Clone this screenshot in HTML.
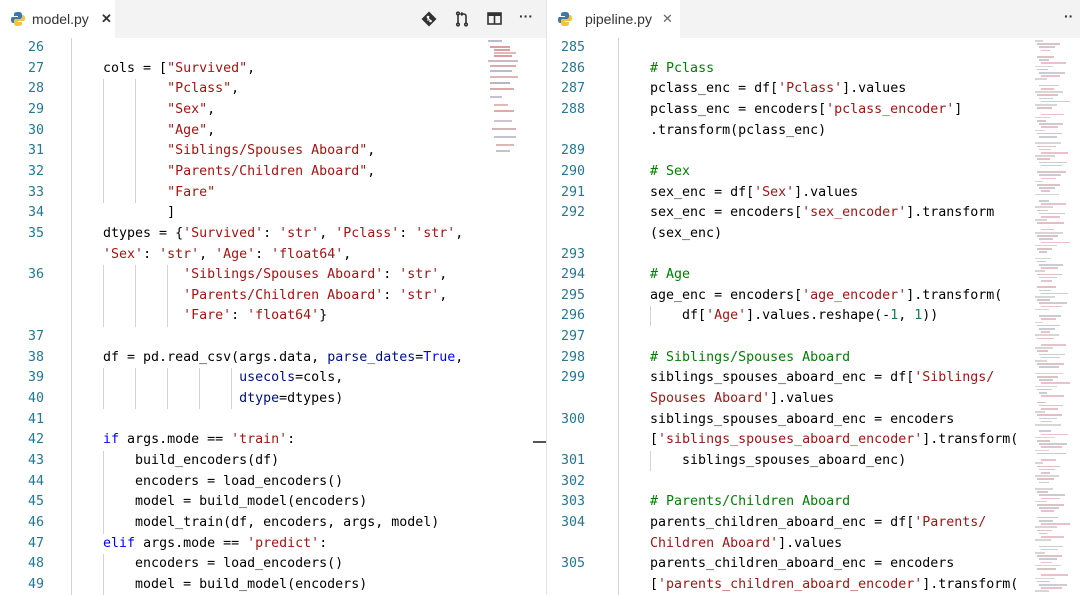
<!DOCTYPE html>
<html><head><meta charset="utf-8"><style>
*{margin:0;padding:0;box-sizing:border-box}
body{width:1080px;height:595px;overflow:hidden;background:#fff;position:relative;font-family:"DejaVu Sans Mono","Liberation Mono",monospace;font-size:13.3px;color:#000}
.tabbar{position:absolute;top:0;height:38px;background:#f3f3f3}
.tab{position:absolute;top:0;height:38px;background:#fff;font-family:"Liberation Sans",sans-serif;font-size:14px;color:#333;line-height:38px}
.pane{position:absolute;top:38px;bottom:0;overflow:hidden}
.row{position:absolute;left:0;height:20.65px;line-height:20.65px;white-space:pre;width:100%}
.ln{position:absolute;text-align:right;color:#237893}
.cd{position:absolute}
.s{color:#a31515}.k{color:#0000ff}.c{color:#008000}.p{color:#001080}.n{color:#098658}
.g{position:absolute;width:1px;background:#d3d3d3}
.mm{position:absolute;height:2px}
</style></head><body>
<div class="tabbar" style="left:0;width:546px"></div>
<div class="tabbar" style="left:547px;width:533px"></div>
<div style="position:absolute;left:546px;top:0;width:1px;height:595px;background:#e4e4e4"></div>
<div class="tab" style="left:0;width:115px">
<svg style="position:absolute;left:10px;top:11px" width="16" height="16" viewBox="0 0 16 16"><path d="M8 1C4 1 4 2.5 4 3.5V5h4v1H2.5C1 6 1 8 1 9s.5 3 2 3H4v-2c0-1.5 1-2 2-2h4c1 0 2-1 2-2V3.5C12 2 11 1 8 1z" fill="#3c78aa"/><path d="M8 15c4 0 4-1.5 4-2.5V11H8v-1h5.5C15 10 15 8 15 7s-.5-3-2-3H12v2c0 1.5-1 2-2 2H6c-1 0-2 1-2 2v2.5C4 14 5 15 8 15z" fill="#f3c33b"/></svg>
<span style="position:absolute;left:32px">model.py</span><span style="position:absolute;left:101px;font-weight:bold;font-size:13px">✕</span></div>
<svg style="position:absolute;left:421px;top:11px" width="16" height="16" viewBox="0 0 16 16"><path d="M8 0.5L15.5 8 8 15.5 0.5 8z" fill="#333"/><circle cx="7" cy="6" r="1.3" fill="#fff"/><circle cx="9.5" cy="10" r="1.3" fill="#fff"/><path d="M7 6v4M7 7l2.5 2.5" stroke="#fff" stroke-width="1"/></svg>
<svg style="position:absolute;left:454px;top:11px" width="16" height="16" viewBox="0 0 16 16" fill="none" stroke="#333" stroke-width="1.6"><path d="M4 3v9"/><path d="M12 13V5c0-1-1-2-2-2H7"/><path d="M8.5 1.5L7 3l1.5 1.5"/><circle cx="4" cy="13.5" r="1.3"/><circle cx="12" cy="13.5" r="1.3"/><circle cx="4" cy="2.5" r="1.3"/></svg>
<svg style="position:absolute;left:487px;top:12px" width="15" height="13" viewBox="0 0 15 13"><rect x="1" y="1" width="13" height="11" fill="none" stroke="#333" stroke-width="1.6"/><rect x="1" y="1" width="13" height="3" fill="#333"/><path d="M7.5 1v11" stroke="#333" stroke-width="1.6"/></svg>
<div style="position:absolute;left:519px;top:8px;font-family:'Liberation Sans';font-size:14px;color:#333;font-weight:bold">···</div>
<div class="tab" style="left:547px;width:133px">
<svg style="position:absolute;left:10px;top:11px" width="16" height="16" viewBox="0 0 16 16"><path d="M8 1C4 1 4 2.5 4 3.5V5h4v1H2.5C1 6 1 8 1 9s.5 3 2 3H4v-2c0-1.5 1-2 2-2h4c1 0 2-1 2-2V3.5C12 2 11 1 8 1z" fill="#3c78aa"/><path d="M8 15c4 0 4-1.5 4-2.5V11H8v-1h5.5C15 10 15 8 15 7s-.5-3-2-3H12v2c0 1.5-1 2-2 2H6c-1 0-2 1-2 2v2.5C4 14 5 15 8 15z" fill="#f3c33b"/></svg>
<span style="position:absolute;left:38px">pipeline.py</span><span style="position:absolute;left:115px;font-size:13px;color:#666">✕</span></div>
<div style="position:absolute;left:1064px;top:8px;font-family:'Liberation Sans';font-size:14px;color:#333;font-weight:bold">··</div>

<div class="pane" style="left:0;width:546px">
<div class="g" style="left:71px;top:0;height:560px"></div>
<div class="g" style="left:103px;top:41px;height:124px"></div>
<div class="g" style="left:135px;top:41px;height:124px"></div>
<div class="g" style="left:103px;top:227px;height:62px"></div><div class="g" style="left:135px;top:227px;height:62px"></div><div class="g" style="left:167px;top:227px;height:62px"></div>
<div class="g" style="left:103px;top:330px;height:41px"></div><div class="g" style="left:135px;top:330px;height:41px"></div><div class="g" style="left:167px;top:330px;height:41px"></div><div class="g" style="left:199px;top:330px;height:41px"></div><div class="g" style="left:231px;top:330px;height:41px"></div>
<div class="g" style="left:103px;top:413px;height:83px"></div><div class="g" style="left:103px;top:516px;height:50px"></div>
<div style="position:absolute;left:533px;top:403px;width:13px;height:2px;background:#555"></div>
<div id="L"></div>
<div style="position:absolute;left:488px;top:0;width:45px;height:120px;opacity:.7">
<div class="mm" style="left:0;top:2px;width:14px;background:#a9b"></div><div class="mm" style="left:2px;top:8px;width:20px;background:#c77"></div><div class="mm" style="left:6px;top:11px;width:16px;background:#c77"></div><div class="mm" style="left:6px;top:14px;width:22px;background:#d99"></div><div class="mm" style="left:6px;top:17px;width:18px;background:#c77"></div><div class="mm" style="left:0;top:22px;width:30px;background:#b9a"></div><div class="mm" style="left:2px;top:27px;width:26px;background:#c88"></div><div class="mm" style="left:2px;top:32px;width:22px;background:#a9b"></div><div class="mm" style="left:2px;top:38px;width:28px;background:#c99"></div><div class="mm" style="left:2px;top:44px;width:20px;background:#99a"></div><div class="mm" style="left:2px;top:50px;width:24px;background:#c88"></div><div class="mm" style="left:2px;top:58px;width:12px;background:#aab"></div><div class="mm" style="left:6px;top:66px;width:14px;background:#d99"></div><div class="mm" style="left:6px;top:72px;width:20px;background:#c88"></div><div class="mm" style="left:6px;top:82px;width:18px;background:#bab"></div><div class="mm" style="left:4px;top:90px;width:24px;background:#b99"></div><div class="mm" style="left:6px;top:98px;width:22px;background:#aab"></div><div class="mm" style="left:8px;top:106px;width:18px;background:#c99"></div><div class="mm" style="left:8px;top:112px;width:14px;background:#aab"></div></div>
</div>

<div class="pane" style="left:547px;width:533px">
<div class="g" style="left:71px;top:0;height:560px"></div>
<div class="g" style="left:103px;top:268px;height:20px"></div>
<div class="g" style="left:103px;top:413px;height:20px"></div>
<div id="R"></div>
<div id="M" style="position:absolute;left:488px;top:0;width:45px;height:560px;opacity:.6"></div>
</div>

<script>
function build(id,base,lnR,rows){
 var h='';
 rows.forEach(function(r,i){
  var t=i*20.65;
  h+='<div class="row" style="top:'+t+'px">'+(r[0]?'<span class="ln" style="right:'+(546-lnR)+'px">'+r[0]+'</span>':'')+'<span class="cd" style="left:'+base+'px">'+r[1]+'</span></div>';
 });
 document.getElementById(id).innerHTML=h;
}
function S(x){return '<span class="s">'+x+'</span>'}
function K(x){return '<span class="k">'+x+'</span>'}
function C(x){return '<span class="c">'+x+'</span>'}
function P(x){return '<span class="p">'+x+'</span>'}
function N(x){return '<span class="n">'+x+'</span>'}
var sp=function(n){return ' '.repeat(n)};
build('L',71,44,[
[26,''],
[27,sp(4)+'cols = ['+S('"Survived"')+','],
[28,sp(12)+S('"Pclass"')+','],
[29,sp(12)+S('"Sex"')+','],
[30,sp(12)+S('"Age"')+','],
[31,sp(12)+S('"Siblings/Spouses Aboard"')+','],
[32,sp(12)+S('"Parents/Children Aboard"')+','],
[33,sp(12)+S('"Fare"')],
[34,sp(12)+']'],
[35,sp(4)+'dtypes = {'+S("'Survived'")+': '+S("'str'")+', '+S("'Pclass'")+': '+S("'str'")+','],
['',sp(4)+S("'Sex'")+': '+S("'str'")+', '+S("'Age'")+': '+S("'float64'")+','],
[36,sp(14)+S("'Siblings/Spouses Aboard'")+': '+S("'str'")+','],
['',sp(14)+S("'Parents/Children Aboard'")+': '+S("'str'")+','],
['',sp(14)+S("'Fare'")+': '+S("'float64'")+'}'],
[37,''],
[38,sp(4)+'df = pd.read_csv(args.data, '+P('parse_dates')+'='+K('True')+','],
[39,sp(21)+P('usecols')+'=cols,'],
[40,sp(21)+P('dtype')+'=dtypes)'],
[41,''],
[42,sp(4)+K('if')+' args.mode == '+S("'train'")+':'],
[43,sp(8)+'build_encoders(df)'],
[44,sp(8)+'encoders = load_encoders()'],
[45,sp(8)+'model = build_model(encoders)'],
[46,sp(8)+'model_train(df, encoders, args, model)'],
[47,sp(4)+K('elif')+' args.mode == '+S("'predict'")+':'],
[48,sp(8)+'encoders = load_encoders()'],
[49,sp(8)+'model = build_model(encoders)']
]);
build('R',71,51,[
[285,''],
[286,sp(4)+C('# Pclass')],
[287,sp(4)+'pclass_enc = df['+S("'Pclass'")+'].values'],
[288,sp(4)+'pclass_enc = encoders['+S("'pclass_encoder'")+']'],
['',sp(4)+'.transform(pclass_enc)'],
[289,''],
[290,sp(4)+C('# Sex')],
[291,sp(4)+'sex_enc = df['+S("'Sex'")+'].values'],
[292,sp(4)+'sex_enc = encoders['+S("'sex_encoder'")+'].transform'],
['',sp(4)+'(sex_enc)'],
[293,''],
[294,sp(4)+C('# Age')],
[295,sp(4)+'age_enc = encoders['+S("'age_encoder'")+'].transform('],
[296,sp(8)+'df['+S("'Age'")+'].values.reshape(-'+N('1')+', '+N('1')+'))'],
[297,''],
[298,sp(4)+C('# Siblings/Spouses Aboard')],
[299,sp(4)+'siblings_spouses_aboard_enc = df['+S("'Siblings/")],
['',sp(4)+S("Spouses Aboard'")+'].values'],
[300,sp(4)+'siblings_spouses_aboard_enc = encoders'],
['',sp(4)+'['+S("'siblings_spouses_aboard_encoder'")+'].transform('],
[301,sp(8)+'siblings_spouses_aboard_enc)'],
[302,''],
[303,sp(4)+C('# Parents/Children Aboard')],
[304,sp(4)+'parents_children_aboard_enc = df['+S("'Parents/")],
['',sp(4)+S("Children Aboard'")+'].values'],
[305,sp(4)+'parents_children_aboard_enc = encoders'],
['',sp(4)+'['+S("'parents_children_aboard_encoder'")+'].transform(']
]);
(function(){var h='',y=2,i=0,cols=['#bbb','#c99','#aab','#d9a'];
while(y<555){var w=8+((i*37)%22),l=((i*13)%4)*2;
if((i%9)!=4) h+='<div class="mm" style="left:'+l+'px;top:'+y+'px;width:'+w+'px;height:1.5px;background:'+cols[i%4]+'"></div>';
y+=3.2;i++;}
document.getElementById('M').innerHTML=h;})();
</script>
</body></html>
